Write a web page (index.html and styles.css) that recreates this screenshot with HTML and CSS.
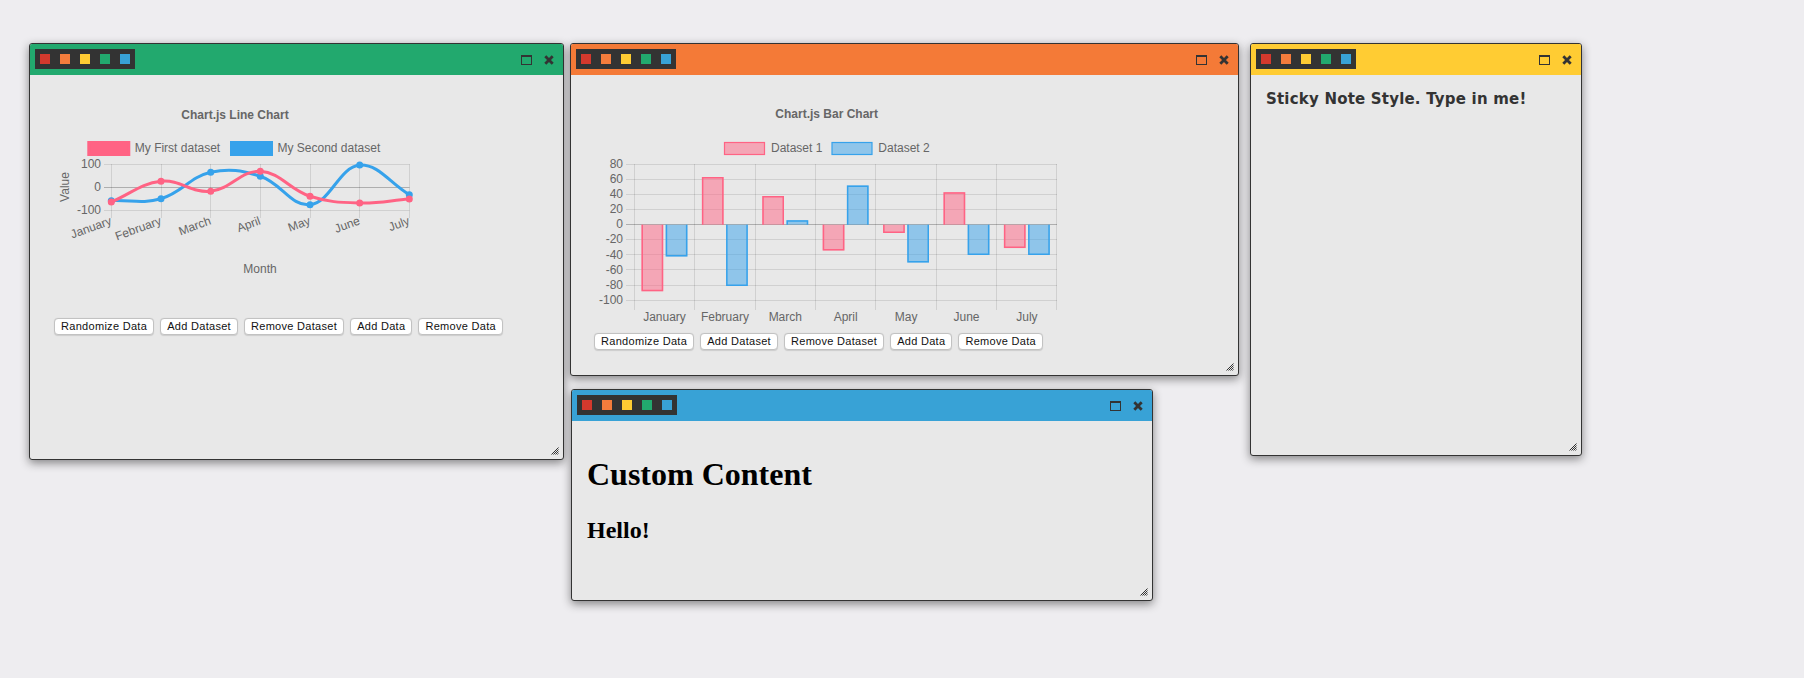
FILE: index.html
```html
<!DOCTYPE html>
<html>
<head>
<meta charset="utf-8">
<title>Windows</title>
<link rel="stylesheet" href="styles.css">
</head>
<body>
<div class="desktop">

  <!-- Line chart window -->
  <div class="win win-line">
    <div class="titlebar tb-green">
      <div class="swatches"><span class="sw sw-r"></span><span class="sw sw-o"></span><span class="sw sw-y"></span><span class="sw sw-g"></span><span class="sw sw-b"></span></div>
      <div class="controls">
        <span class="max"></span>
        <svg class="close" width="10" height="10" viewBox="0 0 10 10"><path d="M1.3 1.3 L8.7 8.7 M8.7 1.3 L1.3 8.7" stroke="#333" stroke-width="2.8"/></svg>
      </div>
    </div>
    <div class="content">
      <svg class="chart chart-line" width="533" height="243" viewBox="30 75 533 243">
        <text class="ctitle" x="235" y="115.5">Chart.js Line Chart</text>
        <rect x="88.8" y="142.5" width="40" height="12" fill="#ff6384" stroke="#ff6384" stroke-width="3"/>
        <text class="clabel" x="134.8" y="148.5">My First dataset</text>
        <rect x="231.5" y="142.5" width="40" height="12" fill="#36a2eb" stroke="#36a2eb" stroke-width="3"/>
        <text class="clabel" x="277.5" y="148.5">My Second dataset</text>

        <g class="grid">
          <line x1="104" y1="164.5" x2="409.5" y2="164.5"/>
          <line x1="104" y1="210.5" x2="409.5" y2="210.5"/>
          <line x1="111.5" y1="164" x2="111.5" y2="218"/>
          <line x1="161.5" y1="164" x2="161.5" y2="218"/>
          <line x1="210.5" y1="164" x2="210.5" y2="218"/>
          <line x1="260.5" y1="164" x2="260.5" y2="218"/>
          <line x1="310.5" y1="164" x2="310.5" y2="218"/>
          <line x1="359.5" y1="164" x2="359.5" y2="218"/>
          <line x1="409.5" y1="164" x2="409.5" y2="218"/>
        </g>
        <line class="zero" x1="104" y1="187.5" x2="409.5" y2="187.5"/>

        <text class="ytick" x="101" y="164.5">100</text>
        <text class="ytick" x="101" y="187.5">0</text>
        <text class="ytick" x="101" y="210.8">-100</text>

        <path d="M111.3,200.7 C131.18,199.9 142.34,204.03 161,198.7 C182.1,192.67 189.62,177.06 210.7,172.3 C229.34,168.1 241.83,170.27 260.3,176.3 C281.55,183.23 291.17,206.84 310,204.7 C330.93,202.32 338.89,167.1 359.7,165 C378.61,164 389.46,182.82 409.3,194.7" fill="none" stroke="#36a2eb" stroke-width="3"/>
        <g fill="#36a2eb">
          <circle cx="111.3" cy="200.7" r="3.5"/><circle cx="161" cy="198.7" r="3.5"/><circle cx="210.7" cy="172.3" r="3.5"/><circle cx="260.3" cy="176.3" r="3.5"/><circle cx="310" cy="204.7" r="3.5"/><circle cx="359.7" cy="165" r="3.5"/><circle cx="409.3" cy="194.7" r="3.5"/>
        </g>
        <path d="M111.3,202 C131.18,193.72 140.52,183.5 161,181.3 C180.28,179.22 191.37,193.25 210.7,191.3 C231.09,189.25 240.84,170.32 260.3,171.3 C280.56,172.32 289.09,189.63 310,196.3 C328.85,202.31 339.76,202.46 359.7,203 C379.48,203.54 389.46,200.6 409.3,199" fill="none" stroke="#ff6384" stroke-width="3"/>
        <g fill="#ff6384">
          <circle cx="111.3" cy="202" r="3.5"/><circle cx="161" cy="181.3" r="3.5"/><circle cx="210.7" cy="191.3" r="3.5"/><circle cx="260.3" cy="171.3" r="3.5"/><circle cx="310" cy="196.3" r="3.5"/><circle cx="359.7" cy="203" r="3.5"/><circle cx="409.3" cy="199" r="3.5"/>
        </g>

        <text class="xrot" x="111.3" y="221" transform="rotate(-20 111.3 221)">January</text>
        <text class="xrot" x="161" y="221" transform="rotate(-20 161 221)">February</text>
        <text class="xrot" x="210.7" y="221" transform="rotate(-20 210.7 221)">March</text>
        <text class="xrot" x="260.3" y="221" transform="rotate(-20 260.3 221)">April</text>
        <text class="xrot" x="310" y="221" transform="rotate(-20 310 221)">May</text>
        <text class="xrot" x="359.7" y="221" transform="rotate(-20 359.7 221)">June</text>
        <text class="xrot" x="409.3" y="221" transform="rotate(-20 409.3 221)">July</text>

        <text class="axtitle" x="66" y="187" transform="rotate(-90 66 187)">Value</text>
        <text class="axtitle" x="260" y="269.5">Month</text>
      </svg>
      <div class="btns btns-line">
        <button class="btn">Randomize Data</button>
        <button class="btn">Add Dataset</button>
        <button class="btn">Remove Dataset</button>
        <button class="btn">Add Data</button>
        <button class="btn">Remove Data</button>
      </div>
    </div>
    <svg class="grip" width="8" height="8" viewBox="0 0 8 8"><path d="M7.5 0.5 L0.5 7.5 M7.5 2.5 L2.5 7.5 M7.5 4.5 L4.5 7.5 M7.5 6.5 L6.5 7.5" stroke="#333" stroke-width="1"/></svg>
  </div>

  <!-- Bar chart window -->
  <div class="win win-bar">
    <div class="titlebar tb-orange">
      <div class="swatches"><span class="sw sw-r"></span><span class="sw sw-o"></span><span class="sw sw-y"></span><span class="sw sw-g"></span><span class="sw sw-b"></span></div>
      <div class="controls">
        <span class="max"></span>
        <svg class="close" width="10" height="10" viewBox="0 0 10 10"><path d="M1.3 1.3 L8.7 8.7 M8.7 1.3 L1.3 8.7" stroke="#333" stroke-width="2.8"/></svg>
      </div>
    </div>
    <div class="content">
      <svg class="chart chart-bar" width="667" height="258" viewBox="571 75 667 258">
        <text class="ctitle" x="826.7" y="115.2">Chart.js Bar Chart</text>
        <rect x="724.5" y="142.5" width="40" height="12" fill="rgba(255,99,132,0.5)" stroke="#ff6384" stroke-width="1.2"/>
        <text class="clabel" x="771" y="148.5">Dataset 1</text>
        <rect x="832" y="142.5" width="40" height="12" fill="rgba(54,162,235,0.5)" stroke="#36a2eb" stroke-width="1.2"/>
        <text class="clabel" x="878.3" y="148.5">Dataset 2</text>

        <g class="grid">
          <line x1="626" y1="164.5" x2="1057" y2="164.5"/>
          <line x1="626" y1="179.5" x2="1057" y2="179.5"/>
          <line x1="626" y1="194.5" x2="1057" y2="194.5"/>
          <line x1="626" y1="209.5" x2="1057" y2="209.5"/>
          <line x1="626" y1="239.5" x2="1057" y2="239.5"/>
          <line x1="626" y1="254.5" x2="1057" y2="254.5"/>
          <line x1="626" y1="269.5" x2="1057" y2="269.5"/>
          <line x1="626" y1="285.5" x2="1057" y2="285.5"/>
          <line x1="626" y1="300.5" x2="1057" y2="300.5"/>
          <line x1="634.5" y1="164" x2="634.5" y2="310"/>
          <line x1="694.5" y1="164" x2="694.5" y2="310"/>
          <line x1="755.5" y1="164" x2="755.5" y2="310"/>
          <line x1="815.5" y1="164" x2="815.5" y2="310"/>
          <line x1="875.5" y1="164" x2="875.5" y2="310"/>
          <line x1="936.5" y1="164" x2="936.5" y2="310"/>
          <line x1="996.5" y1="164" x2="996.5" y2="310"/>
          <line x1="1056.5" y1="164" x2="1056.5" y2="310"/>
        </g>
        <line class="zero" x1="626" y1="224.5" x2="1057" y2="224.5"/>

        <text class="ytick" x="623" y="164.8">80</text>
        <text class="ytick" x="623" y="179.9">60</text>
        <text class="ytick" x="623" y="195">40</text>
        <text class="ytick" x="623" y="210.1">20</text>
        <text class="ytick" x="623" y="225.2">0</text>
        <text class="ytick" x="623" y="240.3">-20</text>
        <text class="ytick" x="623" y="255.4">-40</text>
        <text class="ytick" x="623" y="270.5">-60</text>
        <text class="ytick" x="623" y="285.6">-80</text>
        <text class="ytick" x="623" y="300.7">-100</text>

        <g fill="rgba(255,99,132,0.5)">
          <rect x="641.5" y="224.7" width="21.7" height="66.5"/>
          <rect x="701.9" y="177.1" width="21.7" height="47.6"/>
          <rect x="762.3" y="196" width="21.7" height="28.7"/>
          <rect x="822.7" y="224.7" width="21.7" height="25.7"/>
          <rect x="883.1" y="224.7" width="21.7" height="8.3"/>
          <rect x="943.5" y="192.2" width="21.7" height="32.5"/>
          <rect x="1003.9" y="224.7" width="21.7" height="23.4"/>
        </g>
        <g fill="none" stroke="#ff6384" stroke-width="1.5">
          <path d="M642.25 224.7V290.45H662.45V224.7"/>
          <path d="M702.65 224.7V177.85H722.85V224.7"/>
          <path d="M763.05 224.7V196.75H783.25V224.7"/>
          <path d="M823.45 224.7V249.65H843.65V224.7"/>
          <path d="M883.85 224.7V232.25H904.05V224.7"/>
          <path d="M944.25 224.7V192.95H964.45V224.7"/>
          <path d="M1004.65 224.7V247.35H1024.85V224.7"/>
        </g>
        <g fill="rgba(54,162,235,0.5)">
          <rect x="665.7" y="224.7" width="21.7" height="31.7"/>
          <rect x="726.1" y="224.7" width="21.7" height="61.2"/>
          <rect x="786.5" y="220.2" width="21.7" height="4.5"/>
          <rect x="846.9" y="185.4" width="21.7" height="39.3"/>
          <rect x="907.3" y="224.7" width="21.7" height="37.8"/>
          <rect x="967.7" y="224.7" width="21.7" height="30.2"/>
          <rect x="1028.1" y="224.7" width="21.7" height="30.2"/>
        </g>
        <g fill="none" stroke="#36a2eb" stroke-width="1.5">
          <path d="M666.45 224.7V255.65H686.65V224.7"/>
          <path d="M726.85 224.7V285.15H747.05V224.7"/>
          <path d="M787.25 224.7V220.95H807.45V224.7"/>
          <path d="M847.65 224.7V186.15H867.85V224.7"/>
          <path d="M908.05 224.7V261.75H928.25V224.7"/>
          <path d="M968.45 224.7V254.15H988.65V224.7"/>
          <path d="M1028.85 224.7V254.15H1049.05V224.7"/>
        </g>

        <text class="xtick" x="664.5" y="318.2">January</text>
        <text class="xtick" x="724.9" y="318.2">February</text>
        <text class="xtick" x="785.3" y="318.2">March</text>
        <text class="xtick" x="845.7" y="318.2">April</text>
        <text class="xtick" x="906.1" y="318.2">May</text>
        <text class="xtick" x="966.5" y="318.2">June</text>
        <text class="xtick" x="1026.9" y="318.2">July</text>
      </svg>
      <div class="btns btns-bar">
        <button class="btn">Randomize Data</button>
        <button class="btn">Add Dataset</button>
        <button class="btn">Remove Dataset</button>
        <button class="btn">Add Data</button>
        <button class="btn">Remove Data</button>
      </div>
    </div>
    <svg class="grip" width="8" height="8" viewBox="0 0 8 8"><path d="M7.5 0.5 L0.5 7.5 M7.5 2.5 L2.5 7.5 M7.5 4.5 L4.5 7.5 M7.5 6.5 L6.5 7.5" stroke="#333" stroke-width="1"/></svg>
  </div>

  <!-- Custom content window -->
  <div class="win win-custom">
    <div class="titlebar tb-blue">
      <div class="swatches"><span class="sw sw-r"></span><span class="sw sw-o"></span><span class="sw sw-y"></span><span class="sw sw-g"></span><span class="sw sw-b"></span></div>
      <div class="controls">
        <span class="max"></span>
        <svg class="close" width="10" height="10" viewBox="0 0 10 10"><path d="M1.3 1.3 L8.7 8.7 M8.7 1.3 L1.3 8.7" stroke="#333" stroke-width="2.8"/></svg>
      </div>
    </div>
    <div class="content custom">
      <h1>Custom Content</h1>
      <h2>Hello!</h2>
    </div>
    <svg class="grip" width="8" height="8" viewBox="0 0 8 8"><path d="M7.5 0.5 L0.5 7.5 M7.5 2.5 L2.5 7.5 M7.5 4.5 L4.5 7.5 M7.5 6.5 L6.5 7.5" stroke="#333" stroke-width="1"/></svg>
  </div>

  <!-- Sticky note window -->
  <div class="win win-note">
    <div class="titlebar tb-yellow">
      <div class="swatches"><span class="sw sw-r"></span><span class="sw sw-o"></span><span class="sw sw-y"></span><span class="sw sw-g"></span><span class="sw sw-b"></span></div>
      <div class="controls">
        <span class="max"></span>
        <svg class="close" width="10" height="10" viewBox="0 0 10 10"><path d="M1.3 1.3 L8.7 8.7 M8.7 1.3 L1.3 8.7" stroke="#333" stroke-width="2.8"/></svg>
      </div>
    </div>
    <div class="content note" contenteditable="true">Sticky Note Style. Type in me!</div>
    <svg class="grip" width="8" height="8" viewBox="0 0 8 8"><path d="M7.5 0.5 L0.5 7.5 M7.5 2.5 L2.5 7.5 M7.5 4.5 L4.5 7.5 M7.5 6.5 L6.5 7.5" stroke="#333" stroke-width="1"/></svg>
  </div>

</div>
</body>
</html>
```

FILE: styles.css
```css
html, body {
  margin: 0;
  padding: 0;
}
body {
  background: #eeedf0;
  font-family: "Liberation Sans", Arial, sans-serif;
  width: 1804px;
  height: 678px;
  overflow: hidden;
}
.desktop {
  position: relative;
  width: 1804px;
  height: 678px;
}

/* windows */
.win {
  position: absolute;
  box-sizing: border-box;
  border: 1px solid #333;
  border-radius: 3px;
  background: #e8e8e8;
  box-shadow: 0 3px 10px rgba(0, 0, 0, 0.45);
  display: flex;
  flex-direction: column;
  overflow: hidden;
}
.win-line { left: 29px; top: 43px; width: 535px; height: 417px; }
.win-bar { left: 570px; top: 43px; width: 669px; height: 333px; }
.win-custom { left: 571px; top: 389px; width: 582px; height: 212px; }
.win-note { left: 1250px; top: 43px; width: 332px; height: 413px; }

.titlebar {
  flex: none;
  height: 31px;
  box-sizing: border-box;
  display: flex;
  align-items: flex-start;
  padding: 5px 9px 0 5px;
}
.tb-green { background: #22a96e; }
.tb-orange { background: #f47a37; }
.tb-blue { background: #38a2d6; }
.tb-yellow { background: #ffcc33; }

.swatches {
  display: flex;
  gap: 10px;
  padding: 5px;
  background: #333;
}
.sw { display: block; width: 10px; height: 10px; }
.sw-r { background: #d4392d; }
.sw-o { background: #f47c3c; }
.sw-y { background: #fecb33; }
.sw-g { background: #22a96e; }
.sw-b { background: #38a2d6; }

.controls {
  margin-left: auto;
  margin-top: 6px;
  display: flex;
  align-items: flex-start;
  gap: 12px;
}
.max {
  display: block;
  width: 11px;
  height: 10px;
  box-sizing: border-box;
  border: 1.5px solid #333;
  border-top-width: 2.5px;
}
.close { display: block; }

.grip {
  position: absolute;
  right: 4px;
  bottom: 4px;
}

.content {
  flex: 1;
  min-height: 0;
}

/* charts */
.chart {
  display: block;
  font-family: "Liberation Sans", Arial, sans-serif;
  font-size: 12px;
}
.chart text { fill: #666; }
.ctitle {
  font-weight: bold;
  text-anchor: middle;
  dominant-baseline: middle;
}
.clabel { dominant-baseline: middle; }
.ytick {
  text-anchor: end;
  dominant-baseline: middle;
}
.xtick {
  text-anchor: middle;
  dominant-baseline: middle;
}
.xrot {
  text-anchor: end;
  dominant-baseline: middle;
}
.axtitle {
  text-anchor: middle;
  dominant-baseline: middle;
}
.grid line {
  stroke: rgba(0, 0, 0, 0.1);
  stroke-width: 1;
}
.zero {
  stroke: rgba(0, 0, 0, 0.25);
  stroke-width: 1;
}

/* buttons */
.btns {
  display: flex;
  gap: 6px;
}
.btns-line { padding-left: 24px; }
.btns-bar { padding-left: 23px; }
.btn {
  margin: 0;
  height: 17px;
  box-sizing: border-box;
  padding: 1px 6px;
  font-family: "Liberation Sans", Arial, sans-serif;
  font-size: 11px;
  letter-spacing: 0.3px;
  line-height: 13px;
  color: #111;
  background: #fff;
  border: 1px solid #c2c2c2;
  border-radius: 4px;
  box-shadow: 0 0.5px 1px rgba(0, 0, 0, 0.12);
}

/* custom content */
.custom {
  padding: 14px 15px;
  font-family: "Liberation Serif", "Times New Roman", serif;
  color: #000;
}
.custom h1 {
  font-size: 32px;
  margin: 21px 0 24px;
}
.custom h2 {
  font-size: 24px;
  margin: 0;
}

/* sticky note */
.note {
  padding: 15px;
  font-family: "DejaVu Sans", sans-serif;
  font-weight: bold;
  font-size: 15px;
  letter-spacing: 0.2px;
  color: #333;
  outline: none;
}
```
